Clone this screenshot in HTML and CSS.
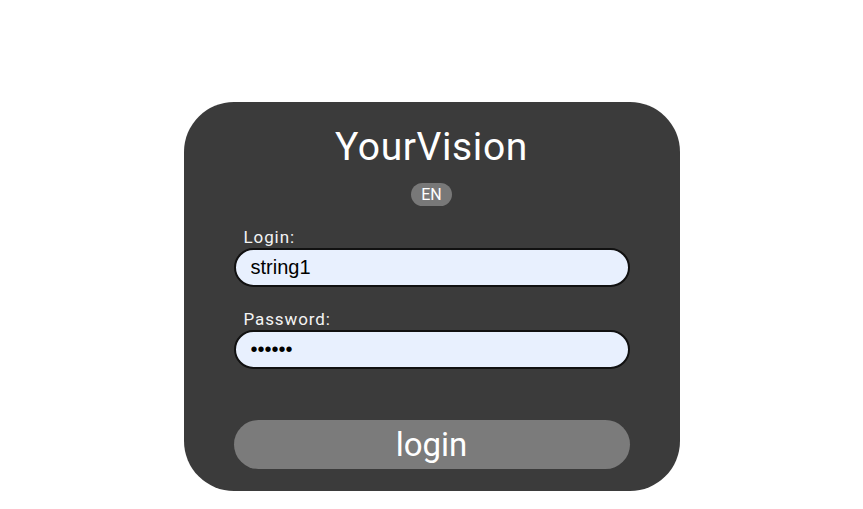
FILE: index.html
```html
<!DOCTYPE html>
<html lang="en">
<head>
<meta charset="utf-8">
<title>YourVision</title>
<link rel="stylesheet" href="styles.css">
</head>
<body>
<main class="page">
  <form class="card">
    <h1 class="title">YourVision</h1>
    <div class="lang"><span class="lang-badge">EN</span></div>
    <label class="field">
      <span class="label">Login:</span>
      <input class="input" type="text" value="string1">
    </label>
    <label class="field">
      <span class="label">Password:</span>
      <input class="input" type="password" value="secret">
    </label>
    <button class="submit" type="button">login</button>
  </form>
</main>
</body>
</html>
```
FILE: styles.css
```css
html, body {
  margin: 0;
  padding: 0;
  background: #ffffff;
}
.page {
  display: flex;
  justify-content: center;
  padding-top: 102px;
}
.card {
  box-sizing: border-box;
  width: 496px;
  height: 389px;
  background: #3b3b3b;
  border-radius: 50px;
  padding: 20px 50px 0 50px;
  display: flex;
  flex-direction: column;
  font-family: Roboto, "Liberation Sans", sans-serif;
  color: #ffffff;
}
.title {
  margin: 0;
  text-align: center;
  font-family: Roboto, sans-serif;
  font-weight: 400;
  font-size: 39px;
  line-height: 50px;
  letter-spacing: 0.6px;
}
.lang {
  display: flex;
  justify-content: center;
  margin-top: 11px;
}
.lang-badge {
  background: #787878;
  color: #ffffff;
  font-family: Roboto, sans-serif;
  font-size: 16px;
  line-height: 23px;
  padding: 0 10px;
  border-radius: 12px;
}
.field {
  display: flex;
  flex-direction: column;
  margin-top: 20px;
}
.field + .field {
  margin-top: 21px;
}
.label {
  font-family: Roboto, sans-serif;
  font-size: 17px;
  line-height: 22px;
  letter-spacing: 0.9px;
  padding-left: 10px;
  color: #f4f4f4;
}
.input {
  box-sizing: border-box;
  width: 396px;
  height: 39px;
  border: 2px solid #111111;
  border-radius: 20px;
  background: #e8f0fe;
  padding: 0 15px;
  font-family: "Liberation Sans", Arial, sans-serif;
  font-size: 20px;
  color: #000000;
  outline: none;
}
.submit {
  margin-top: 51px;
  width: 396px;
  height: 49px;
  border: none;
  border-radius: 25px;
  background: #7b7b7b;
  color: #ffffff;
  font-family: Roboto, sans-serif;
  font-size: 33px;
  line-height: 49px;
  padding: 0;
}
```
